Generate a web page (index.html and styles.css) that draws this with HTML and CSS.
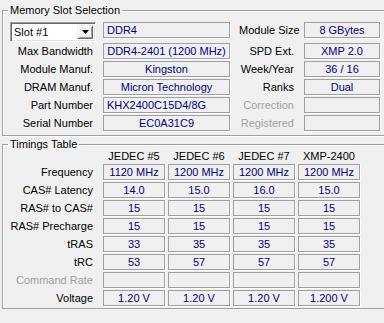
FILE: index.html
```html
<!DOCTYPE html>
<html>
<head>
  <title>Memory SPD</title>
  <link rel="stylesheet" href="styles.css">
</head>
<body>
  <fieldset class="group slots">
    <legend>Memory Slot Selection</legend>
    <div class="slot-grid">
      <div class="combo">
        <span class="combo-text">Slot #1</span>
        <span class="drop"><svg width="7" height="4" viewBox="0 0 7 4"><path d="M0 0h7L3.5 4z" fill="#000"/></svg></span>
      </div>
      <div class="field left">DDR4</div>
      <div class="lbl">Module Size</div>
      <div class="field">8 GBytes</div>

      <div class="lbl">Max Bandwidth</div>
      <div class="field">DDR4-2401 (1200 MHz)</div>
      <div class="lbl">SPD Ext.</div>
      <div class="field">XMP 2.0</div>

      <div class="lbl">Module Manuf.</div>
      <div class="field">Kingston</div>
      <div class="lbl">Week/Year</div>
      <div class="field">36 / 16</div>

      <div class="lbl">DRAM Manuf.</div>
      <div class="field">Micron Technology</div>
      <div class="lbl">Ranks</div>
      <div class="field">Dual</div>

      <div class="lbl">Part Number</div>
      <div class="field left">KHX2400C15D4/8G</div>
      <div class="lbl off">Correction</div>
      <div class="field"></div>

      <div class="lbl">Serial Number</div>
      <div class="field">EC0A31C9</div>
      <div class="lbl off">Registered</div>
      <div class="field"></div>
    </div>
  </fieldset>

  <fieldset class="group timings">
    <legend>Timings Table</legend>
    <div class="timing-grid">
      <div></div>
      <div class="head">JEDEC #5</div>
      <div class="head">JEDEC #6</div>
      <div class="head">JEDEC #7</div>
      <div class="head">XMP-2400</div>

      <div class="lbl">Frequency</div>
      <div class="field">1120 MHz</div>
      <div class="field">1200 MHz</div>
      <div class="field">1200 MHz</div>
      <div class="field">1200 MHz</div>

      <div class="lbl">CAS# Latency</div>
      <div class="field">14.0</div>
      <div class="field">15.0</div>
      <div class="field">16.0</div>
      <div class="field">15.0</div>

      <div class="lbl">RAS# to CAS#</div>
      <div class="field">15</div>
      <div class="field">15</div>
      <div class="field">15</div>
      <div class="field">15</div>

      <div class="lbl">RAS# Precharge</div>
      <div class="field">15</div>
      <div class="field">15</div>
      <div class="field">15</div>
      <div class="field">15</div>

      <div class="lbl">tRAS</div>
      <div class="field">33</div>
      <div class="field">35</div>
      <div class="field">35</div>
      <div class="field">35</div>

      <div class="lbl">tRC</div>
      <div class="field">53</div>
      <div class="field">57</div>
      <div class="field">57</div>
      <div class="field">57</div>

      <div class="lbl off">Command Rate</div>
      <div class="field"></div>
      <div class="field"></div>
      <div class="field"></div>
      <div class="field"></div>

      <div class="lbl">Voltage</div>
      <div class="field">1.20 V</div>
      <div class="field">1.20 V</div>
      <div class="field">1.20 V</div>
      <div class="field">1.200 V</div>
    </div>
  </fieldset>
</body>
</html>
```

FILE: styles.css
```css
body {
  margin: 0;
  background: #f0f0f0;
  font-family: "Liberation Sans", Arial, sans-serif;
  font-size: 11px;
  color: #000;
  overflow: hidden;
}

.group {
  margin: 0 0 0 2px;
  width: 383px;
  box-sizing: border-box;
  border: 1px solid #a0a0a0;
  box-shadow: inset 1px 1px 0 #fff, 1px 1px 0 #fff;
  padding: 0 0 0 7px;
}

.group legend {
  padding: 0 2px;
  margin-left: -2px;
  line-height: 14px;
}

.slots {
  margin-top: 3px;
  padding-top: 5px;
  padding-bottom: 4px;
}

.timings {
  margin-top: 1px;
  padding-bottom: 2px;
}

.slot-grid {
  display: grid;
  grid-template-columns: 84px 127px 56px 76px;
  grid-template-rows: 19px repeat(5, 16px);
  column-gap: 9px;
  row-gap: 2px;
}

.timing-grid {
  display: grid;
  grid-template-columns: 90px repeat(4, 62px);
  grid-template-rows: 11px repeat(8, 16px);
  column-gap: 3px;
  row-gap: 2px;
}

.timing-grid .lbl {
  padding-right: 7px;
}

.lbl {
  text-align: right;
  line-height: 16px;
  white-space: nowrap;
  padding-right: 1px;
}

.lbl.off {
  color: #a0a0a0;
}

.head {
  text-align: center;
  line-height: 11px;
  white-space: nowrap;
}

.field {
  border: 1px solid #a0a0a0;
  box-shadow: 1px 1px 0 #fff;
  box-sizing: border-box;
  height: 16px;
  line-height: 14px;
  text-align: center;
  color: #000080;
  white-space: nowrap;
  overflow: hidden;
}

.field.left {
  text-align: left;
  padding-left: 3px;
}

.combo {
  display: flex;
  align-items: stretch;
  height: 20px;
  box-sizing: border-box;
  width: 86px;
  background: #fff;
  border: 1px solid;
  border-color: #a0a0a0 #fff #fff #a0a0a0;
  box-shadow: inset 1px 1px 0 #696969, inset -1px -1px 0 #e3e3e3;
  padding: 2px;
}

.combo-text {
  flex: 1;
  line-height: 14px;
  padding-left: 1px;
}

.drop {
  width: 16px;
  box-sizing: border-box;
  background: #f0f0f0;
  border: 1px solid;
  border-color: #f0f0f0 #696969 #696969 #f0f0f0;
  box-shadow: inset 1px 1px 0 #fff, inset -1px -1px 0 #a0a0a0;
  display: flex;
  align-items: center;
  justify-content: center;
}
```
